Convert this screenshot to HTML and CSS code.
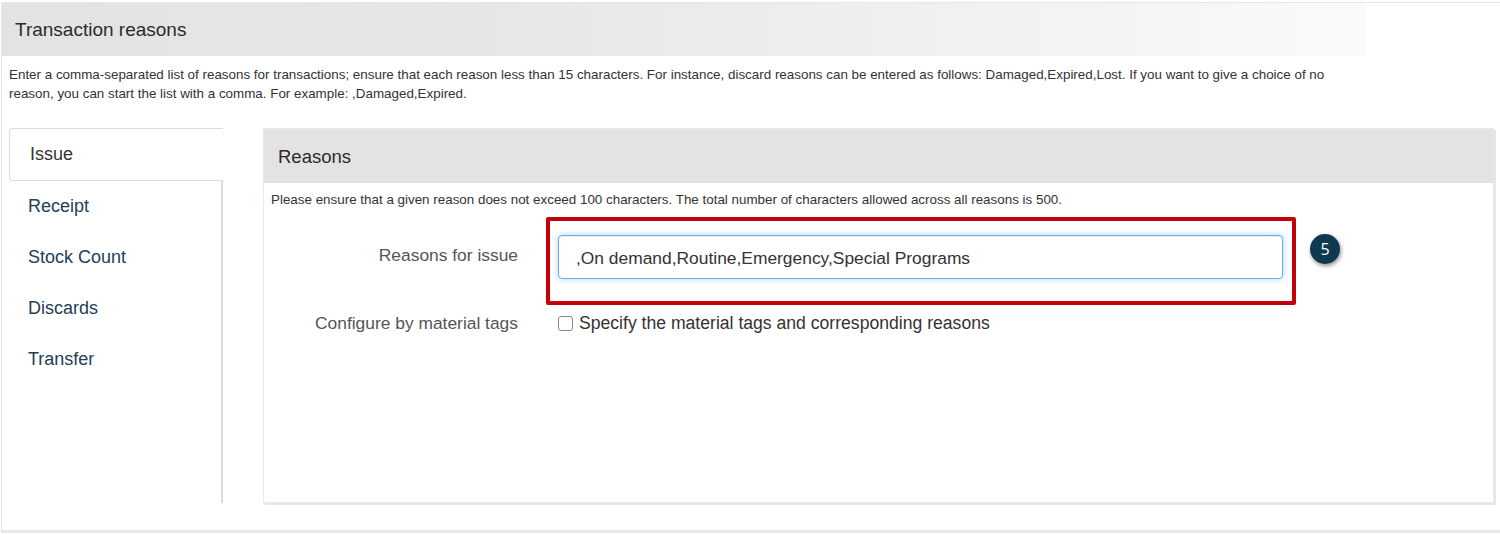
FILE: index.html
```html
<!DOCTYPE html>
<html>
<head>
<meta charset="utf-8">
<title>Transaction reasons</title>
<link rel="stylesheet" href="styles.css">
</head>
<body>
<div class="page">
  <div class="page-header">Transaction reasons</div>
  <p class="intro">Enter a comma-separated list of reasons for transactions; ensure that each reason less than 15 characters. For instance, discard reasons can be entered as follows: Damaged,Expired,Lost. If you want to give a choice of no reason, you can start the list with a comma. For example: ,Damaged,Expired.</p>
  <div class="content">
    <nav class="tabs">
      <div class="tab active">Issue</div>
      <div class="tab-list">
        <div class="tab">Receipt</div>
        <div class="tab">Stock Count</div>
        <div class="tab">Discards</div>
        <div class="tab">Transfer</div>
      </div>
    </nav>
    <section class="panel">
      <div class="panel-header">Reasons</div>
      <div class="panel-body">
        <p class="note">Please ensure that a given reason does not exceed 100 characters. The total number of characters allowed across all reasons is 500.</p>
        <div class="form-row first">
          <label class="form-label">Reasons for issue</label>
          <div class="input-wrap">
            <input class="text-input" type="text" value=",On demand,Routine,Emergency,Special Programs">
            <div class="highlight"></div>
            <div class="badge">5</div>
          </div>
        </div>
        <div class="form-row second">
          <label class="form-label">Configure by material tags</label>
          <label class="check"><span class="checkbox"></span>Specify the material tags and corresponding reasons</label>
        </div>
      </div>
    </section>
  </div>
</div>
</body>
</html>
```

FILE: styles.css
```css
html, body {
  margin: 0;
  padding: 0;
  background: #ffffff;
}
body {
  font-family: "Liberation Sans", Arial, sans-serif;
  color: #333333;
  overflow: hidden;
}
.page {
  margin: 2px 0 0 1px;
  width: 1520px;
  height: 531px;
  border-top: 1px solid #e6e6e6;
  border-left: 1px solid #e6e6e6;
  border-bottom: 3px solid #e8e8e8;
  box-sizing: border-box;
}
.page-header {
  width: 1364px;
  height: 53px;
  line-height: 53px;
  padding-left: 13px;
  box-sizing: border-box;
  font-size: 19px;
  color: #2b2b2b;
  background: linear-gradient(to right, #e3e3e3 0%, #e6e6e6 35%, #f2f2f2 75%, #fafafa 100%);
}
.intro {
  margin: 0;
  padding: 9px 0 0 7px;
  width: 1330px;
  font-size: 13.4px;
  line-height: 19px;
  color: #333333;
}
.content {
  display: flex;
  margin-top: 25px;
  padding-left: 7px;
  height: 375px;
}
.tabs {
  width: 214px;
  display: flex;
  flex-direction: column;
  flex-shrink: 0;
}
.tab {
  height: 51px;
  line-height: 51px;
  padding-left: 19px;
  font-size: 18px;
  color: #23405a;
}
.tab.active {
  height: 53px;
  line-height: 51px;
  padding-left: 20px;
  box-sizing: border-box;
  border: 1px solid #dddddd;
  border-right: none;
  border-radius: 4px 0 0 4px;
  color: #333333;
}
.tab-list {
  flex: 1;
  border-right: 2px solid #dcdcdc;
}
.panel {
  margin-left: 40px;
  width: 1231px;
  height: 375px;
  box-sizing: border-box;
  border: 1px solid #e9e9e9;
  box-shadow: 2px 2px 0 #e6e6e6;
}
.panel-header {
  height: 54px;
  line-height: 56px;
  padding-left: 14px;
  font-size: 18.5px;
  color: #2b2b2b;
  background: #e3e3e3;
}
.panel-body {
  padding: 8px 0 0 7px;
}
.note {
  margin: 0;
  font-size: 13.4px;
  line-height: 17px;
  color: #333333;
}
.form-row {
  display: grid;
  grid-template-columns: 247px 725px;
  column-gap: 40px;
  align-items: center;
}
.form-row.first {
  margin-top: 27px;
}
.form-row.second {
  margin-top: 34px;
}
.form-label {
  text-align: right;
  font-size: 17.4px;
  color: #555555;
}
.form-row.first .form-label {
  margin-top: -3px;
}
.input-wrap {
  position: relative;
  height: 44px;
}
.text-input {
  display: block;
  width: 725px;
  height: 44px;
  box-sizing: border-box;
  margin: 0;
  padding: 2px 0 0 17px;
  font-family: "Liberation Sans", Arial, sans-serif;
  font-size: 17.4px;
  color: #333333;
  border: 1px solid #66afe9;
  border-radius: 4px;
  outline: none;
  box-shadow: inset 0 1px 1px rgba(0,0,0,.075), 0 0 6px rgba(102,175,233,.55);
  background: #ffffff;
}
.highlight {
  position: absolute;
  left: -12px;
  top: -18px;
  width: 750px;
  height: 88px;
  box-sizing: border-box;
  border: 4px solid #c4000a;
  border-radius: 2px;
  pointer-events: none;
}
.badge {
  position: absolute;
  left: 752px;
  top: -1px;
  width: 30px;
  height: 30px;
  border-radius: 50%;
  background: #0e3a4f;
  color: #ffffff;
  font-family: "Open Sans", "Liberation Sans", sans-serif;
  font-size: 16px;
  line-height: 30px;
  text-align: center;
  box-shadow: 1px 2px 4px rgba(0,0,0,.45);
}
.check {
  display: flex;
  align-items: center;
  font-size: 17.6px;
  color: #333333;
}
.checkbox {
  width: 13px;
  height: 13px;
  border: 1px solid #8a8a8a;
  border-radius: 3px;
  background: #ffffff;
  margin-right: 6px;
  flex-shrink: 0;
}
```
